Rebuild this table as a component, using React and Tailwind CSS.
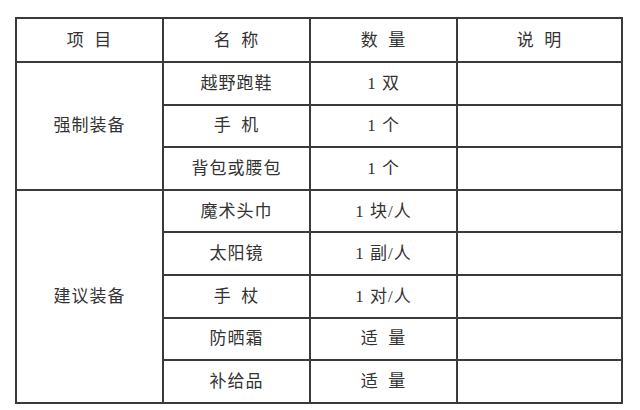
const FONT = { fontFamily: '"Liberation Serif", "Noto Sans CJK SC", serif' }

const required = [
  { name: "越野跑鞋", qty: "1\u00a0双" },
  { name: "手\u2002机", qty: "1\u00a0个" },
  { name: "背包或腰包", qty: "1\u00a0个" },
]

const suggested = [
  { name: "魔术头巾", qty: "1\u00a0块/人" },
  { name: "太阳镜", qty: "1\u00a0副/人" },
  { name: "手\u2002杖", qty: "1\u00a0对/人" },
  { name: "防晒霜", qty: "适\u2002量" },
  { name: "补给品", qty: "适\u2002量" },
]

const cell = "border-2 border-[#3a3a3a] text-center align-middle p-0"

function Group({ label, items }) {
  return items.map((it, i) => (
    <tr key={it.name} className="h-[42.6px]">
      {i === 0 && (
        <td className={cell} rowSpan={items.length}>
          {label}
        </td>
      )}
      <td className={cell}>{it.name}</td>
      <td className={cell}>{it.qty}</td>
      <td className={cell}></td>
    </tr>
  ))
}

export default function App() {
  return (
    <div className="w-[640px] h-[410px] bg-white overflow-hidden pt-[17px] pl-[15px]" style={FONT}>
      <table className="table-fixed border-collapse w-[608px] text-[17px] leading-none tracking-[1px] text-[#333]">
        <colgroup>
          <col className="w-[147px]" />
          <col className="w-[147px]" />
          <col className="w-[147px]" />
          <col />
        </colgroup>
        <tbody>
          <tr className="h-[44px]">
            <td className={cell}>项{"\u2002"}目</td>
            <td className={cell}>名{"\u2002"}称</td>
            <td className={cell}>数{"\u2002"}量</td>
            <td className={cell}>说{"\u2002"}明</td>
          </tr>
          <Group label="强制装备" items={required} />
          <Group label="建议装备" items={suggested} />
        </tbody>
      </table>
    </div>
  )
}
